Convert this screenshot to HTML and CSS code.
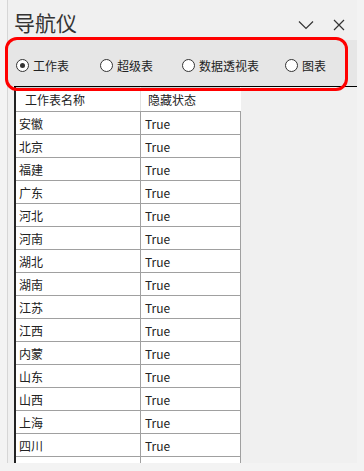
FILE: index.html
```html
<!DOCTYPE html>
<html lang="zh">
<head>
  <meta charset="UTF-8">
  <title>导航仪</title>
  <link rel="stylesheet" href="styles.css">
</head>
<body>
  <div class="pane">
    <div class="title-bar">
      <span class="title">导航仪</span>
      <span class="tools">
        <svg width="16" height="10" viewBox="0 0 16 10"><path d="M1 1.5 L8 8.5 L15 1.5" fill="none" stroke="#333" stroke-width="1.2"/></svg>
        <svg width="12" height="12" viewBox="0 0 12 12"><path d="M1 1 L11 11 M11 1 L1 11" fill="none" stroke="#333" stroke-width="1.2"/></svg>
      </span>
    </div>

    <div class="options">
      <label class="opt o1"><span class="radio checked"></span>工作表</label>
      <label class="opt o2"><span class="radio"></span>超级表</label>
      <label class="opt o3"><span class="radio"></span>数据透视表</label>
      <label class="opt"><span class="radio"></span>图表</label>
    </div>

    <div class="grid-area">
      <table class="grid">
        <thead>
          <tr><th class="c1">工作表名称</th><th>隐藏状态</th></tr>
        </thead>
        <tbody>
          <tr><td>安徽</td><td>True</td></tr>
          <tr><td>北京</td><td>True</td></tr>
          <tr><td>福建</td><td>True</td></tr>
          <tr><td>广东</td><td>True</td></tr>
          <tr><td>河北</td><td>True</td></tr>
          <tr><td>河南</td><td>True</td></tr>
          <tr><td>湖北</td><td>True</td></tr>
          <tr><td>湖南</td><td>True</td></tr>
          <tr><td>江苏</td><td>True</td></tr>
          <tr><td>江西</td><td>True</td></tr>
          <tr><td>内蒙</td><td>True</td></tr>
          <tr><td>山东</td><td>True</td></tr>
          <tr><td>山西</td><td>True</td></tr>
          <tr><td>上海</td><td>True</td></tr>
          <tr><td>四川</td><td>True</td></tr>
          <tr><td>天津</td><td>True</td></tr>
        </tbody>
      </table>
    </div>
  </div>

  <!-- 红框标注 -->
  <div class="mark"></div>
</body>
</html>
```

FILE: styles.css
```css
html, body {
  margin: 0;
  height: 100%;
  overflow: hidden;
}
body {
  font-family: "Noto Sans CJK SC", "Liberation Sans", sans-serif;
  background-color: #f3f3f3;
  color: #222;
  position: relative;
}
.pane {
  margin-left: 7px;
  width: 349px;
  height: 463px;
  border-left: 1px solid #d6d6d6;
  background-color: #f0f0f0;
  overflow: hidden;
}
.title-bar {
  height: 40px;
  display: flex;
  align-items: flex-end;
  justify-content: space-between;
  padding-left: 6px;
  box-sizing: border-box;
}
.title {
  font-size: 21px;
  line-height: 30px;
  color: #333;
  margin-bottom: 3px;
}
.tools {
  display: flex;
  align-items: center;
  gap: 19px;
  margin-bottom: 9px;
  margin-right: 12px;
}
.options {
  height: 46px;
  background-color: #e6e6e6;
  display: flex;
  align-items: center;
  padding: 4px 0 0 8px;
  box-sizing: border-box;
  font-size: 12px;
  color: #222;
  white-space: nowrap;
}
.opt {
  display: flex;
  align-items: center;
  flex-shrink: 0;
}
.o1 { width: 84px; }
.o2 { width: 82px; }
.o3 { width: 103px; }
.radio {
  width: 13px;
  height: 13px;
  box-sizing: border-box;
  border: 1px solid #333;
  border-radius: 50%;
  background-color: #fff;
  margin-right: 4px;
  position: relative;
  flex-shrink: 0;
}
.radio.checked::after {
  content: "";
  position: absolute;
  left: 3px;
  top: 3px;
  width: 5px;
  height: 5px;
  border-radius: 50%;
  background-color: #333;
}
.grid-area {
  margin-left: 6px;
  border-top: 1px solid #000;
  height: 400px;
  overflow: hidden;
}
.grid {
  border-collapse: collapse;
  background-color: #fff;
  border-left: 2px solid #222;
  font-size: 12px;
}
.grid th {
  height: 23px;
  font-weight: normal;
  text-align: left;
  padding: 0 0 0 8px;
  border-right: 1px solid #e2e2e2;
  border-bottom: 1px solid #a0a0a0;
  border-top: 1px solid #cfcfcf;
}
.grid th.c1 { width: 115px; padding-left: 9px; }
.grid th + th { padding-left: 7px; width: 92px; border-right: none; }
.grid td {
  height: 22px;
  padding: 0 0 0 3px;
  border-right: 1px solid #a0a0a0;
  border-bottom: 1px solid #a0a0a0;
}
.grid td + td { padding-left: 4px; }
.mark {
  position: absolute;
  left: 5px;
  top: 37px;
  width: 337px;
  height: 48px;
  border: 3px solid #ff0000;
  border-radius: 12px;
}
```
